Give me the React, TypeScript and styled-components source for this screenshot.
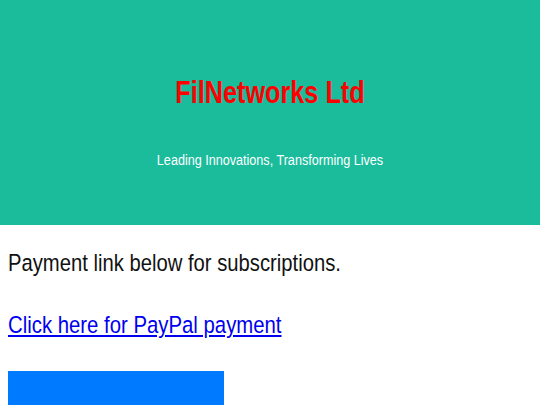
import React from "react";
import styled, { createGlobalStyle } from "styled-components";

const GlobalStyle = createGlobalStyle`
  html, body {
    margin: 0;
    padding: 0;
    background: #ffffff;
    overflow: hidden;
  }
  body {
    font-family: "Liberation Sans", Arial, sans-serif;
  }
`;

// the reference text is a narrow Arial; no narrow face is installed, so squeeze it
const Header = styled.header`
  background: #1abc9c;
  padding: 75px 16px 56px;
  text-align: center;
`;

const Title = styled.h1`
  margin: 0 0 40px;
  font-size: 31px;
  line-height: 36px;
  font-weight: 700;
  color: #ff0000;
  transform: scaleX(0.814);
`;

const Tagline = styled.p`
  margin: 0;
  font-size: 15.5px;
  line-height: 18px;
  color: #ffffff;
  transform: scaleX(0.813);
`;

const Main = styled.main`
  padding: 24px 8px 0;
  display: flex;
  flex-direction: column;
  align-items: flex-start;
`;

const Intro = styled.p`
  margin: 0 0 34px;
  font-size: 24.5px;
  line-height: 28px;
  color: #111111;
  transform: scaleX(0.826);
  transform-origin: left center;
`;

const PayLink = styled.a`
  font-size: 24.5px;
  line-height: 28px;
  color: #0000ee;
  text-decoration: underline;
  transform: scaleX(0.83);
  transform-origin: left center;
`;

const PayButton = styled.div`
  margin-top: 32px;
  width: 216px;
  height: 35px;
  background: #007bff;
`;

const App: React.FC = () => {
  return (
    <>
      <GlobalStyle />
      <Header>
        <Title>FilNetworks Ltd</Title>
        <Tagline>Leading Innovations, Transforming Lives</Tagline>
      </Header>
      <Main>
        <Intro>Payment link below for subscriptions.</Intro>
        <PayLink href="#">Click here for PayPal payment</PayLink>
        <PayButton />
      </Main>
    </>
  );
};

export default App;
